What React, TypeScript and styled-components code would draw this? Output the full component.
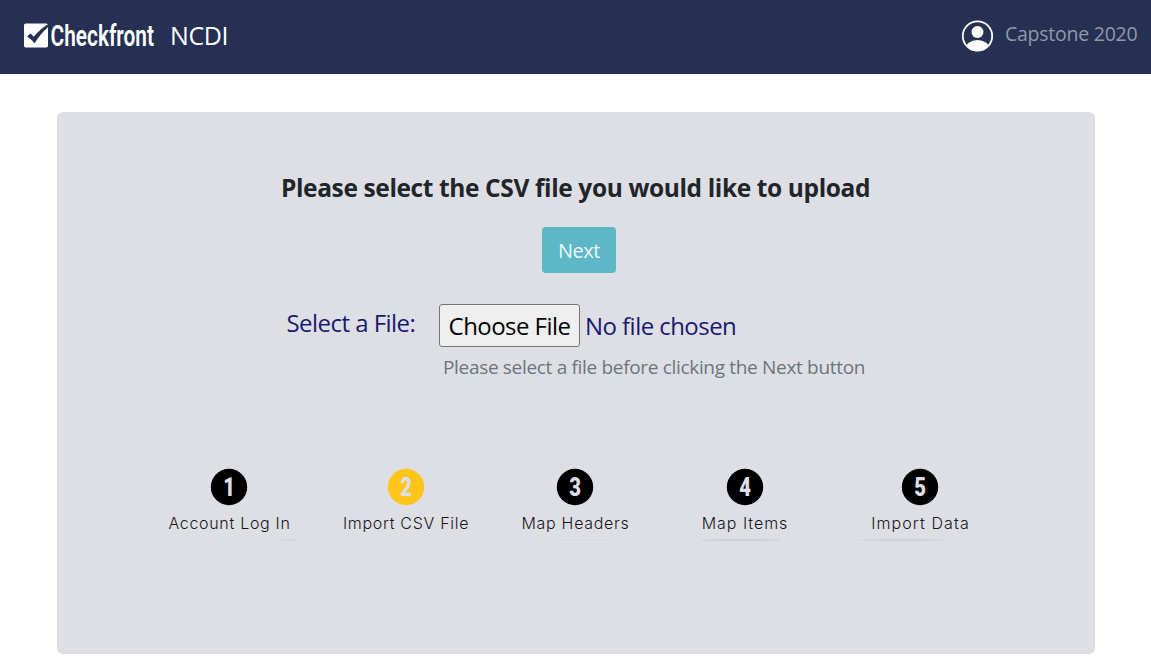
import React from "react";
import styled, { createGlobalStyle } from "styled-components";

const GlobalStyle = createGlobalStyle`
  *, *::before, *::after { box-sizing: border-box; }
  body {
    margin: 0;
    background: #fff;
    font-family: "Open Sans", "Noto Sans", sans-serif;
  }
`;

const Header = styled.header`
  height: 74px;
  padding: 0 14px 0 24px;
  display: flex;
  align-items: flex-start;
  justify-content: space-between;
  background: #253053;
`;

const Brand = styled.div`
  display: flex;
  align-items: flex-start;
`;

const Logo = styled.svg`
  display: block;
  width: 136px;
  height: 40px;
  margin-top: 16px;
  overflow: visible;
`;

const BrandName = styled.span`
  margin: 17px 0 0 10px;
  font-size: 25px;
  line-height: 36px;
  letter-spacing: -0.4px;
  color: #fff;
`;

const Account = styled.div`
  display: flex;
  align-items: flex-start;
`;

const Avatar = styled.svg`
  display: block;
  width: 33px;
  height: 33px;
  margin: 20px 11px 0 0;
`;

const AccountName = styled.span`
  margin-top: 19px;
  width: 132px;
  font-size: 19.5px;
  line-height: 30px;
  letter-spacing: -0.25px;
  white-space: nowrap;
  color: #9297a9;
`;

const Panel = styled.main`
  margin: 38px 56px 0 57px;
  height: 542px;
  padding-top: 58px;
  border-radius: 6px;
  background: #dedfe5;
`;

const Title = styled.h1`
  margin: 0 0 0 224px;
  font-size: 24.5px;
  font-weight: 700;
  line-height: 36px;
  letter-spacing: -0.38px;
  white-space: nowrap;
  color: #212529;
`;

const NextButton = styled.button`
  display: block;
  width: 74px;
  height: 46px;
  margin: 21px 0 0 485px;
  padding: 2px 0 0;
  border: 0;
  border-radius: 4px;
  background: #5eb7c7;
  color: #eaf6f8;
  font: 400 20px/30px "Open Sans", sans-serif;
  letter-spacing: -0.45px;
`;

const FileRow = styled.div`
  display: flex;
  align-items: flex-start;
  margin: 31px 0 0 229.5px;
  color: #191970;
`;

const FileLabel = styled.label`
  width: 152.5px;
  padding-top: 2px;
  font-size: 24px;
  line-height: 34px;
  letter-spacing: -0.54px;
  white-space: nowrap;
`;

const FileField = styled.div`
  display: flex;
  flex-direction: column;
`;

const FileInput = styled.div`
  display: flex;
  align-items: center;
  gap: 5px;
  font-size: 24px;
  letter-spacing: -0.55px;
  white-space: nowrap;
`;

const ChooseButton = styled.button`
  width: 141px;
  height: 43px;
  padding: 1px 0 0;
  border: 1px solid #767676;
  border-radius: 3px;
  background: #efefef;
  color: #000;
  font: 400 24px/34px "Open Sans", sans-serif;
  letter-spacing: -0.55px;
`;

const FileStatus = styled.span`
  line-height: 34px;
`;

const Hint = styled.small`
  margin: 6px 0 0 4px;
  font-size: 19px;
  line-height: 28px;
  letter-spacing: -0.32px;
  white-space: nowrap;
  color: #6c757d;
`;

const Steps = styled.ol`
  display: grid;
  grid-template-columns: 178px 175px 164px 175px 176px;
  margin: 87px 0 0 83px;
  padding: 0;
  list-style: none;
`;

const Step = styled.li`
  display: flex;
  flex-direction: column;
  align-items: center;
`;

const Badge = styled.svg`
  display: block;
  width: 38px;
  height: 38px;
`;

const StepLabel = styled.span<{ $spacing: number }>`
  margin-top: 5px;
  padding-left: 1px;
  font-family: Inter, sans-serif;
  font-size: 16px;
  font-weight: 300;
  line-height: 24px;
  letter-spacing: ${(p) => p.$spacing}px;
  white-space: nowrap;
  color: #17171a;
`;

const StepShade = styled.span<{ $width: number; $shift: number; $strength: number }>`
  width: ${(p) => p.$width}px;
  height: 3px;
  margin-top: 4px;
  transform: translateX(${(p) => p.$shift}px);
  background: linear-gradient(rgba(120, 122, 134, ${(p) => p.$strength}), transparent);
  border-radius: 50%;
`;

const steps = [
  { label: "Account Log In", spacing: 0.7, shade: 20, shift: 60, strength: 0.12 },
  { label: "Import CSV File", spacing: 0.7, shade: 60, shift: 10, strength: 0.04, active: true },
  { label: "Map Headers", spacing: 0.7, shade: 80, shift: 10, strength: 0.08 },
  { label: "Map Items", spacing: 0.95, shade: 82, shift: -4, strength: 0.22 },
  { label: "Import Data", spacing: 1.1, shade: 94, shift: -19, strength: 0.18 },
];

export default function App() {
  return (
    <>
      <GlobalStyle />
      <Header>
        <Brand>
          <Logo viewBox="0 0 136 40" aria-label="Checkfront">
            <rect x="0" y="7.5" width="24" height="24" rx="1.8" fill="#fff" />
            <path d="M3 20.5 6.7 17.6 9.7 20.8Q15 14 23.8 8.2L24 11.2Q16.5 17.5 10.7 27.2Q7.4 23 3 20.5Z" fill="#253053" />
            <text x="0" y="30.5" fill="#fff" fontFamily="Roboto, sans-serif" fontWeight="600" fontSize="30" textLength="150" lengthAdjust="spacingAndGlyphs" transform="translate(26.5 0) scale(.69 1)">
              Checkfront
            </text>
          </Logo>
          <BrandName>NCDI</BrandName>
        </Brand>
        <Account>
          <Avatar viewBox="0 0 33 33">
            <clipPath id="face"><circle cx="16.5" cy="16" r="14.4" /></clipPath>
            <circle cx="16.5" cy="16" r="14.7" fill="none" stroke="#fff" strokeWidth="1.8" />
            <circle cx="16.5" cy="12" r="6" fill="#fff" />
            <ellipse cx="16.5" cy="29" rx="12.3" ry="9" fill="#fff" clipPath="url(#face)" />
          </Avatar>
          <AccountName>Capstone 2020</AccountName>
        </Account>
      </Header>
      <Panel>
        <Title>Please select the CSV file you would like to upload</Title>
        <NextButton>Next</NextButton>
        <FileRow>
          <FileLabel>Select a File:</FileLabel>
          <FileField>
            <FileInput>
              <ChooseButton>Choose File</ChooseButton>
              <FileStatus>No file chosen</FileStatus>
            </FileInput>
            <Hint>Please select a file before clicking the Next button</Hint>
          </FileField>
        </FileRow>
        <Steps>
          {steps.map((step, i) => (
            <Step key={step.label}>
              <Badge viewBox="0 0 38 38">
                <circle cx="19" cy="19" r="18.2" fill={step.active ? "#ffc51b" : "#000"} />
                <text x="0" y="28.2" textAnchor="middle" transform="translate(19.2 0) scale(.78 1)" fill="#dedfe5" fontFamily="Roboto, sans-serif" fontWeight="900" fontSize="26">
                  {i + 1}
                </text>
              </Badge>
              <StepLabel $spacing={step.spacing}>{step.label}</StepLabel>
              <StepShade $width={step.shade} $shift={step.shift} $strength={step.strength} />
            </Step>
          ))}
        </Steps>
      </Panel>
    </>
  );
}
